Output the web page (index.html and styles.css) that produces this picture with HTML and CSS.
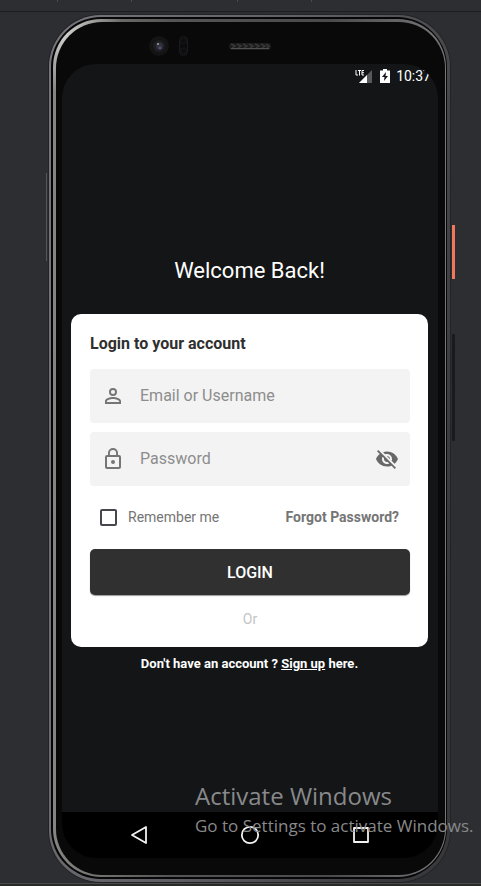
FILE: index.html
```html
<!DOCTYPE html>
<html lang="en">
<head>
<meta charset="utf-8">
<meta name="viewport" content="width=device-width, initial-scale=1">
<title>Login</title>
<link rel="stylesheet" href="styles.css">
</head>
<body>
<div class="toolbar"><span class="tick"></span><span class="tick"></span><span class="tick wide"></span><span class="tick"></span></div>
<div class="stage">
  <div class="phone">
    <span class="key side"></span>
    <span class="key power"></span>
    <span class="key volume"></span>
    <div class="rim"><div class="band"><div class="glass">
      <div class="bezel">
        <svg class="camera" width="42" height="24" viewBox="0 0 42 24" aria-hidden="true">
          <circle cx="11" cy="12" r="10" fill="#141416"/><circle cx="11" cy="12" r="6" fill="#1e1e21"/>
          <circle cx="11.500" cy="12" r="3.500" fill="#30323a"/><circle cx="12" cy="14" r="1.500" fill="#4a4f7c"/><circle cx="10" cy="10" r="1" fill="#a5a5ad"/>
          <rect x="31.500" y="2.500" width="8" height="19" rx="4" fill="#0b0b0d" stroke="#1b1b1d"/>
          <circle cx="35.500" cy="7" r="3" fill="#0d0d0f" stroke="#171719"/><circle cx="35.500" cy="17" r="3" fill="#0d0d0f" stroke="#171719"/>
        </svg>
        <svg class="speaker" width="42" height="8" viewBox="0 0 42 8" aria-hidden="true">
          <rect width="42" height="7" y="1" rx="3" fill="#1b1b1b"/>
          <path d="M2 2l4 2-3 2M8 2l4 2-3 2M14 2l4 2-3 2M20 2l4 2-3 2M26 2l4 2-3 2M32 2l4 2-3 2M37 2l3 2-2 2" fill="none" stroke="#383838" stroke-width="1.500"/>
          <path d="M2 6.500h38" stroke="#505050"/>
        </svg>
      </div>
      <div class="screen">
        <div class="status">
          <svg width="18" height="16" viewBox="0 0 18 16" aria-label="LTE signal">
            <path d="M4 15L17 2v13z" fill="#58595b"/><path d="M4 15l8-8v8z" fill="#fff"/>
            <path d="M1 2v5h2M3 2.500h3M4.500 2.500V7.500M9 2.500H7v4.500h2M7 4.700h2" fill="none" stroke="#fff"/>
          </svg>
          <svg width="10" height="14" viewBox="0 0 10 14" aria-label="Battery charging">
            <path d="M3 0h4v1.500h3V14H0V1.500h3z" fill="#fff"/><path d="M6 3L2 8h2.500L4 12l4-5H5.500z" fill="#141517"/>
          </svg>
          <span class="time">10:37</span>
        </div>
        <main class="content">
          <h1>Welcome Back!</h1>
          <form class="card">
            <h2>Login to your account</h2>
            <div class="field">
              <svg width="24" height="24" viewBox="0 0 24 24" aria-hidden="true"><path fill="#757575" d="M12 5.900a2.100 2.100 0 1 1 0 4.200 2.100 2.100 0 0 1 0-4.200m0 9c2.970 0 6.100 1.460 6.100 2.100v1.100H5.900V17c0-.64 3.130-2.100 6.100-2.100M12 4a4 4 0 1 0 0 8 4 4 0 0 0 0-8zm0 9c-2.670 0-8 1.340-8 4v3h16v-3c0-2.660-5.330-4-8-4z"/></svg>
              <input type="text" placeholder="Email or Username" aria-label="Email or Username">
            </div>
            <div class="field">
              <svg width="24" height="24" viewBox="0 0 24 24" aria-hidden="true"><path fill="#757575" d="M12 17a2 2 0 1 0 0-4 2 2 0 0 0 0 4zm6-9h-1V6A5 5 0 0 0 7 6v2H6a2 2 0 0 0-2 2v10c0 1.100.9 2 2 2h12a2 2 0 0 0 2-2V10a2 2 0 0 0-2-2zM8.900 6a3.100 3.100 0 0 1 6.200 0v2H8.900zM18 20H6V10h12z"/></svg>
              <input type="password" placeholder="Password" aria-label="Password">
              <button class="eye" type="button" aria-label="Show password"><svg width="24" height="24" viewBox="0 0 24 24"><path fill="#686868" d="M12 7c2.760 0 5 2.240 5 5 0 .65-.13 1.260-.36 1.830l2.920 2.920c1.510-1.260 2.700-2.890 3.430-4.750-1.730-4.390-6-7.500-11-7.500-1.400 0-2.740.25-3.980.7l2.160 2.160C10.740 7.130 11.350 7 12 7zM2 4.270l2.280 2.280.46.46C3.080 8.300 1.780 10.020 1 12c1.730 4.390 6 7.500 11 7.500 1.550 0 3.030-.3 4.380-.84l.42.42L19.730 22 21 20.730 3.270 3 2 4.270zM7.530 9.800l1.550 1.550c-.05.21-.08.43-.08.65 0 1.660 1.340 3 3 3 .22 0 .44-.03.65-.08l1.550 1.550c-.67.33-1.410.53-2.200.53-2.760 0-5-2.240-5-5 0-.79.2-1.530.53-2.200zm4.310-.78l3.150 3.150.02-.16c0-1.660-1.340-3-3-3l-.17.010z"/></svg></button>
            </div>
            <div class="options">
              <label><input type="checkbox">Remember me</label>
              <a href="#forgot">Forgot Password?</a>
            </div>
            <button class="login" type="submit">LOGIN</button>
            <p class="or">Or</p>
          </form>
          <p class="signup">Don't have an account ? <a href="#signup">Sign up</a> here.</p>
        </main>
        <nav class="navbar">
          <button type="button" aria-label="Back"><svg width="20" height="20" viewBox="0 0 20 20"><path d="M3 10L17 2v16z"/></svg></button>
          <button type="button" aria-label="Home"><svg width="20" height="20" viewBox="0 0 20 20"><circle cx="10" cy="10" r="8.200"/></svg></button>
          <button type="button" aria-label="Recent apps"><svg width="20" height="20" viewBox="0 0 20 20"><rect x="3" y="3" width="14" height="14"/></svg></button>
        </nav>
      </div>
    </div></div></div>
  </div>
</div>
<div class="edge"></div>
<aside class="watermark"><p class="big">Activate Windows</p><p>Go to Settings to activate Windows.</p></aside>
</body>
</html>
```
FILE: styles.css
```css
* { box-sizing: border-box; }
body {
  margin: 0;
  min-height: 100vh;
  position: relative;
  display: flex;
  flex-direction: column;
  overflow: hidden;
  background: #2d2e32;
  color: #fff;
  font-family: Roboto, "Liberation Sans", sans-serif;
}
h1, h2, p { margin: 0; }
button { border: 0; padding: 0; background: none; font: inherit; color: inherit; }
svg { display: block; flex: none; }

.toolbar { display: flex; height: 12px; border-bottom: 1px solid #1c1d20; }
.tick { width: 74px; height: 2px; border-right: 1px solid #4c4d51; }
.tick:first-child { width: 58px; }
.tick.wide { width: 106px; }
.edge { height: 3px; background: #272a25; border-top: 1px solid #4a4a50; }

.stage { flex: 1; display: flex; padding: 3px 31px 1px 49px; }
.phone {
  position: relative;
  flex: 1;
  display: flex;
  padding: 2px 3px 3px 2px;
  border-radius: 52px;
  background: linear-gradient(100deg, #77767b, #5f5e62 50%, #38383a 90%);
  box-shadow: 0 0 0 1px #222326;
}
.rim { flex: 1; display: flex; padding: 2px 1px 2px 2px; border-radius: 50px; background: #060608; }
.band {
  flex: 1;
  display: flex;
  padding: 3px 1px 2px 3px;
  border-radius: 48px;
  background: radial-gradient(circle at 10px 14px, #d0d0cc, transparent 60px), linear-gradient(90deg, #858581, #555 30%, #4a4a4a 70%, #77777a);
}
.glass { flex: 1; display: flex; flex-direction: column; padding: 0 7px 17px 6px; border-radius: 46px; background: #09090a; }
.bezel { height: 42px; display: flex; align-items: center; padding: 6px 0 0 86px; }
.speaker { margin-left: 39px; }
.key { position: absolute; width: 3px; }
.side { left: -3px; top: 158px; height: 88px; width: 1px; background: #55565a; }
.power { right: -5px; top: 210px; height: 54px; background: #ef7859; }
.volume { right: -5px; top: 319px; height: 107px; border-radius: 1px; background: #191a1b; }

.screen { flex: 1; display: flex; flex-direction: column; overflow: hidden; border-radius: 34px; background: #141517; }
.status { display: flex; align-items: center; justify-content: flex-end; height: 24px; padding-right: 7px; }
.status .time { margin-left: 6px; font-size: 14px; }
.status svg + svg { margin-left: 7px; }
.content { flex: 1; display: flex; flex-direction: column; padding: 168px 10px 0 9px; }
h1 { font-size: 22px; line-height: 30px; font-weight: 400; text-align: center; }
.card {
  display: flex;
  flex-direction: column;
  margin-top: 28px;
  padding: 19px 18px 19px 19px;
  border-radius: 10px;
  background: #fff;
  color: #757575;
}
h2 { font-size: 16px; line-height: 22px; margin-bottom: 14px; font-weight: 700; color: #2f2f2f; }
.field { display: flex; align-items: center; height: 54px; padding: 0 11px; border-radius: 4px; background: #f3f3f3; }
.field + .field { margin-top: 9px; }
.field input {
  flex: 1;
  min-width: 0;
  margin-left: 15px;
  padding: 0;
  border: 0;
  outline: 0;
  background: none;
  font: 16px/24px Roboto, "Liberation Sans", sans-serif;
  color: #2f2f2f;
}
.field input::placeholder { color: #8d8d8d; opacity: 1; }
.options { display: flex; align-items: center; justify-content: space-between; height: 22px; margin: 20px 11px 21px 10px; font-size: 14px; }
.options label { display: flex; align-items: center; gap: 11px; }
.options input { appearance: none; width: 17px; height: 17px; margin: 0; border: 2px solid #49454f; border-radius: 2px; }
.options a { color: #757575; font-weight: 700; text-decoration: none; }
.login { height: 46px; border-radius: 5px; background: #303030; box-shadow: 0 1px 1px #999; color: #fff; font-size: 16px; font-weight: 500; }
.or { margin-top: 15px; font-size: 14px; line-height: 18px; text-align: center; color: #c4c4c4; }
.signup { margin-top: 8px; font-size: 13px; line-height: 18px; font-weight: 700; text-align: center; }
.signup a { color: inherit; }
.navbar { display: flex; justify-content: center; gap: 91px; height: 46px; background: #000; }
.navbar svg { fill: none; stroke: #f2f2f2; stroke-width: 1.8; stroke-linejoin: round; }

.watermark { position: absolute; left: 195px; bottom: 48px; color: #88898b; font-family: "Open Sans", "Noto Sans", sans-serif; font-size: 17px; line-height: 24px; white-space: nowrap; pointer-events: none; }
.watermark .big { font-size: 24px; line-height: 36px; }
```
